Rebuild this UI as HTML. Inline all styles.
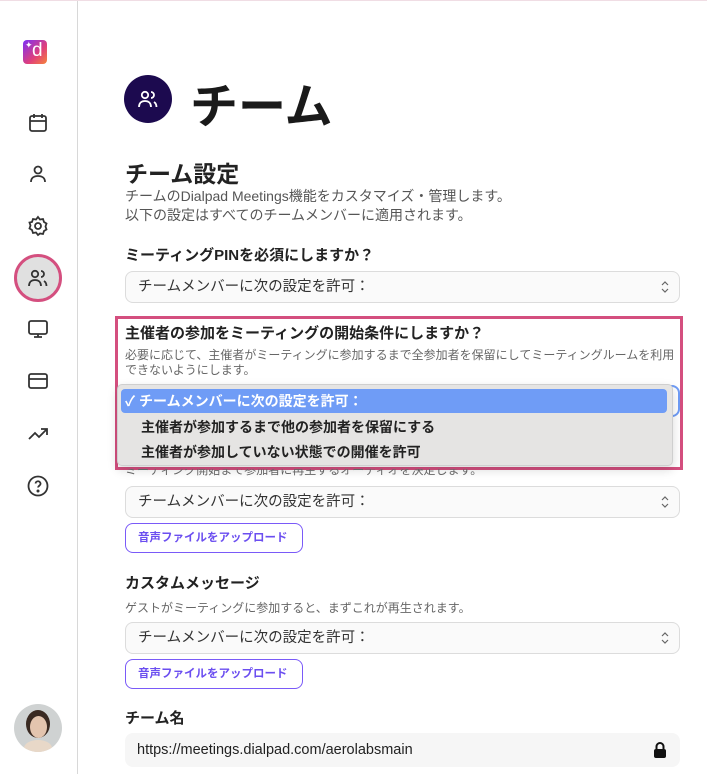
<!DOCTYPE html>
<html><head><meta charset="utf-8"><style>
*{box-sizing:border-box;margin:0;padding:0}
body{width:707px;height:773px;overflow:hidden;background:#fff;font-family:"Liberation Sans","Noto Sans CJK JP",sans-serif;color:#222;position:relative;border-top:1px solid #f0dde4}
.side{position:absolute;left:0;top:0;width:78px;height:773px;border-right:1px solid #d8d8d8}
.ic{position:absolute;left:26px;width:24px;height:24px}
.abs{position:absolute}
.sel{position:absolute;left:125px;width:555px;height:32px;border:1px solid #dcdcdc;border-radius:8px;background:#fafafa;font-size:14.5px;color:#333;padding:0 12px;line-height:30px;white-space:nowrap}
.arr{position:absolute;right:10px;top:8px}
.btn{position:absolute;left:125px;width:178px;height:30px;border:1px solid #7a5af8;border-radius:8px;color:#6b4ef0;font-size:11.5px;font-weight:bold;padding:0 12px;line-height:28px;white-space:nowrap;overflow:hidden}
.lbl{position:absolute;left:125px;font-size:15px;font-weight:bold;color:#222;white-space:nowrap}
.desc{position:absolute;left:125px;font-size:12px;color:#666}
</style></head><body>
<div class="side">
<div class="abs" style="left:23px;top:39px;width:24px;height:24px;border-radius:4px;background:linear-gradient(135deg,#7b2ff7,#e0407a 60%,#f6843a)"><span style="position:absolute;left:9px;top:0px;color:#fff;font-size:19px;line-height:22px">d</span><span style="position:absolute;left:2px;top:0;color:#fff;font-size:9px">✦</span></div>
<svg class="ic" style="top:110px" viewBox="0 0 24 24" fill="none" stroke="#333" stroke-width="1.8"><rect x="4" y="5" width="16" height="15" rx="2"/><path d="M4 10h16M8 3v4M16 3v4"/></svg>
<svg class="ic" style="top:161px" viewBox="0 0 24 24" fill="none" stroke="#333" stroke-width="1.8"><circle cx="12" cy="8" r="3.5"/><path d="M5 20c0-4 3-6 7-6s7 2 7 6"/></svg>
<svg class="ic" style="top:213px" viewBox="0 0 24 24" fill="none" stroke="#333" stroke-width="1.8"><circle cx="12" cy="12" r="3"/><path d="M12 3l2 2.5 3-.5 1 3 2.5 1.5-1 3 1 3-2.5 1.5-1 3-3-.5L12 21l-2-2.5-3 .5-1-3-2.5-1.5 1-3-1-3L6 8l1-3 3 .5z"/></svg>
<div class="abs" style="left:14px;top:253px;width:48px;height:48px;border-radius:50%;background:#e0e0e0;border:3px solid #d44f7f"></div>
<svg class="ic" style="top:265px" viewBox="0 0 24 24" fill="none" stroke="#333" stroke-width="1.8"><circle cx="9" cy="8" r="3.2"/><path d="M3 20c0-4 2.5-6 6-6s6 2 6 6M15 5a3 3 0 010 6M18 15c1.5 1 2.5 2.5 2.5 5"/></svg>
<svg class="ic" style="top:316px" viewBox="0 0 24 24" fill="none" stroke="#333" stroke-width="1.8"><rect x="3" y="4" width="18" height="13" rx="2"/><path d="M12 17v3M8 20h8"/></svg>
<svg class="ic" style="top:368px" viewBox="0 0 24 24" fill="none" stroke="#333" stroke-width="1.8"><rect x="3" y="5" width="18" height="14" rx="2"/><path d="M3 10h18"/></svg>
<svg class="ic" style="top:421px" viewBox="0 0 24 24" fill="none" stroke="#333" stroke-width="1.8"><path d="M3 17l6-6 4 4 8-8M15 7h6v6"/></svg>
<svg class="ic" style="top:473px" viewBox="0 0 24 24" fill="none" stroke="#333" stroke-width="1.8"><circle cx="12" cy="12" r="9.5"/><path d="M9.5 9.5a2.5 2.5 0 115 .5c0 1.5-2.5 2-2.5 3.5"/><circle cx="12" cy="17" r=".6" fill="#333"/></svg>
<div class="abs" style="left:14px;top:703px;width:48px;height:48px;border-radius:50%;background:#cfd2d2;overflow:hidden"><div class="abs" style="left:12px;top:6px;width:24px;height:28px;border-radius:50%;background:#3a2a22"></div><div class="abs" style="left:16px;top:12px;width:17px;height:22px;border-radius:50%;background:#e3c4ae"></div><div class="abs" style="left:10px;top:36px;width:28px;height:16px;border-radius:50%;background:#e8d8c8"></div></div>
</div>

<div class="abs" style="left:124px;top:74px;width:48px;height:48px;border-radius:50%;background:#1c0a4f"></div>
<svg class="abs" style="left:136px;top:86px" width="24" height="24" viewBox="0 0 24 24" fill="none" stroke="#fff" stroke-width="1.8"><circle cx="9" cy="8" r="3.2"/><path d="M3 20c0-4 2.5-6 6-6s6 2 6 6M15 5a3 3 0 010 6M18 15c1.5 1 2.5 2.5 2.5 5"/></svg>
<div class="abs" style="left:190px;top:66px;font-size:48px;font-weight:bold;color:#1a1a1a">チーム</div>

<div class="abs" style="left:125px;top:154px;font-size:23px;font-weight:bold">チーム設定</div>
<div class="abs" style="left:125px;top:186px;font-size:14px;color:#555;line-height:19px">チームのDialpad Meetings機能をカスタマイズ・管理します。<br>以下の設定はすべてのチームメンバーに適用されます。</div>
<div class="lbl" style="top:243px">ミーティングPINを必須にしますか？</div>
<div class="sel" style="top:270px">チームメンバーに次の設定を許可：<svg class="arr" width="8" height="14" viewBox="0 0 8 14" fill="none" stroke="#666" stroke-width="1.2"><path d="M1 5l3-3 3 3M1 9l3 3 3-3"/></svg></div>

<div class="abs" style="left:115px;top:315px;width:568px;height:154px;border:3px solid #d44f7f"></div>
<div class="lbl" style="top:321px">主催者の参加をミーティングの開始条件にしますか？</div>
<div class="desc" style="top:347px;line-height:15px;width:555px">必要に応じて、主催者がミーティングに参加するまで全参加者を保留にしてミーティングルームを利用できないようにします。</div>
<div class="abs" style="left:670px;top:384px;width:10px;height:32px;border:2px solid #6f9cf6;border-left:none;border-radius:0 8px 8px 0"></div>
<div class="abs" style="left:117px;top:383px;width:556px;height:82px;background:#e5e4e3;border:1px solid #cfcfcf;border-radius:5px;box-shadow:0 4px 10px rgba(0,0,0,.15)"></div>
<div class="abs" style="left:121px;top:388px;width:546px;height:24px;background:#6f9cf6;border-radius:4px;color:#fff;font-weight:bold;font-size:14px;line-height:24px;padding-left:4px">✓ チームメンバーに次の設定を許可：</div>
<div class="abs" style="left:141px;top:416px;font-size:14px;font-weight:bold;color:#222">主催者が参加するまで他の参加者を保留にする</div>
<div class="abs" style="left:141px;top:441px;font-size:14px;font-weight:bold;color:#222">主催者が参加していない状態での開催を許可</div>
<div class="desc" style="top:468px;height:8px;overflow:hidden;line-height:10px;font-size:12px"><span style="position:relative;top:-4px">ミーティング開始まで参加者に再生するオーディオを決定します。</span></div>

<div class="sel" style="top:485px">チームメンバーに次の設定を許可：<svg class="arr" width="8" height="14" viewBox="0 0 8 14" fill="none" stroke="#666" stroke-width="1.2"><path d="M1 5l3-3 3 3M1 9l3 3 3-3"/></svg></div>
<div class="btn" style="top:522px">音声ファイルをアップロード</div>

<div class="lbl" style="top:571px">カスタムメッセージ</div>
<div class="desc" style="top:598px">ゲストがミーティングに参加すると、まずこれが再生されます。</div>
<div class="sel" style="top:621px">チームメンバーに次の設定を許可：<svg class="arr" width="8" height="14" viewBox="0 0 8 14" fill="none" stroke="#666" stroke-width="1.2"><path d="M1 5l3-3 3 3M1 9l3 3 3-3"/></svg></div>
<div class="btn" style="top:658px">音声ファイルをアップロード</div>

<div class="lbl" style="top:706px">チーム名</div>
<div class="abs" style="left:125px;top:732px;width:555px;height:34px;background:#f6f6f6;border-radius:8px;font-size:14.5px;color:#222;padding:0 12px;line-height:34px">https://meetings.dialpad.com/aerolabsmain
<svg class="abs" style="left:528px;top:8px" width="14" height="18" viewBox="0 0 14 18"><path d="M3.5 8V5.5a3.5 3.5 0 017 0V8" fill="none" stroke="#111" stroke-width="2"/><rect x="1" y="8" width="12" height="9" rx="2" fill="#111"/></svg></div>
</body></html>
